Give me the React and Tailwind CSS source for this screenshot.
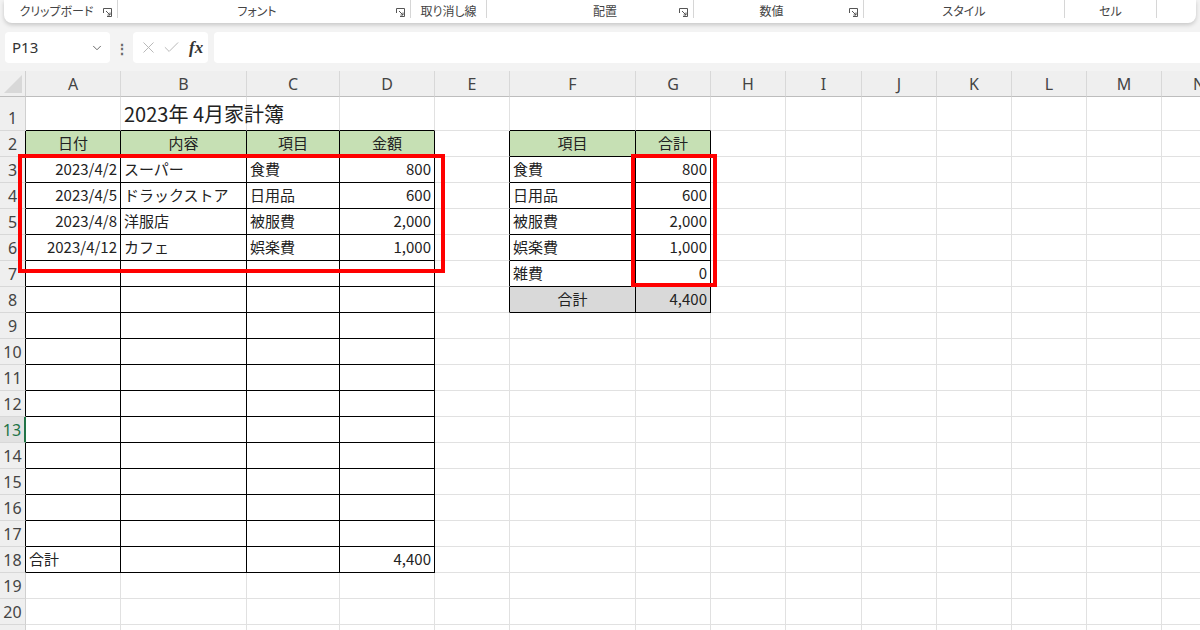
import React from "react";
import { ChevronDown, X, Check } from "lucide-react";

const COLS = [
  { name: "A", w: 95 },
  { name: "B", w: 126 },
  { name: "C", w: 93 },
  { name: "D", w: 95 },
  { name: "E", w: 75 },
  { name: "F", w: 126 },
  { name: "G", w: 75 },
  { name: "H", w: 75 },
  { name: "I", w: 76 },
  { name: "J", w: 75 },
  { name: "K", w: 75 },
  { name: "L", w: 75 },
  { name: "M", w: 75 },
  { name: "N", w: 75 },
];

const ROWS = Array.from({ length: 21 }, (_, i) => i + 1);

// cell contents: key "row-col"
const DATA = {
  "1-1": { v: "2023年 4月家計簿", title: true },
  "2-0": { v: "日付", a: "c" },
  "2-1": { v: "内容", a: "c" },
  "2-2": { v: "項目", a: "c" },
  "2-3": { v: "金額", a: "c" },
  "3-0": { v: "2023/4/2", a: "r" },
  "3-1": { v: "スーパー" },
  "3-2": { v: "食費" },
  "3-3": { v: "800", a: "r" },
  "4-0": { v: "2023/4/5", a: "r" },
  "4-1": { v: "ドラックストア" },
  "4-2": { v: "日用品" },
  "4-3": { v: "600", a: "r" },
  "5-0": { v: "2023/4/8", a: "r" },
  "5-1": { v: "洋服店" },
  "5-2": { v: "被服費" },
  "5-3": { v: "2,000", a: "r" },
  "6-0": { v: "2023/4/12", a: "r" },
  "6-1": { v: "カフェ" },
  "6-2": { v: "娯楽費" },
  "6-3": { v: "1,000", a: "r" },
  "18-0": { v: "合計" },
  "18-3": { v: "4,400", a: "r" },
  "2-5": { v: "項目", a: "c" },
  "2-6": { v: "合計", a: "c" },
  "3-5": { v: "食費" },
  "3-6": { v: "800", a: "r" },
  "4-5": { v: "日用品" },
  "4-6": { v: "600", a: "r" },
  "5-5": { v: "被服費" },
  "5-6": { v: "2,000", a: "r" },
  "6-5": { v: "娯楽費" },
  "6-6": { v: "1,000", a: "r" },
  "7-5": { v: "雑費" },
  "7-6": { v: "0", a: "r" },
  "8-5": { v: "合計", a: "c" },
  "8-6": { v: "4,400", a: "r" },
};

const inT = (r, c) =>
  (r >= 2 && r <= 18 && c >= 0 && c <= 3) ||
  (r >= 2 && r <= 8 && c >= 5 && c <= 6);

const Launcher = () => (
  <svg width="9" height="9" viewBox="0 0 9 9" fill="none" stroke="#555" strokeWidth="1">
    <path d="M0.5 5V0.5H8.5V8.5H4" />
    <path d="M3 3L7 7M7 4.5V7H4.5" />
  </svg>
);

const RibbonGroup = ({ label, w, launcher, pl = 0, last }) => (
  <div className="flex h-full items-start" style={{ width: w }}>
    <div className="flex-1 h-full flex items-center justify-center pb-[1px]" style={{ paddingLeft: pl }}>
      {label}
    </div>
    {launcher ? (
      <div className="w-[14px] h-full flex items-center pt-[2px]">
        <Launcher />
      </div>
    ) : null}
    {last ? null : <div className="w-px h-[18px] bg-[#d6d6d6] shrink-0"></div>}
  </div>
);

const Cell = ({ r, c, w }) => {
  const d = DATA[`${r}-${c}`];
  const rb = inT(r, c) || inT(r, c + 1) ? "border-r-black" : "border-r-[#e1e1e1]";
  const bb = inT(r, c) || inT(r + 1, c) ? "border-b-black" : "border-b-[#e1e1e1]";
  let bg = "";
  if (r === 2 && inT(r, c)) bg = "bg-[#c6e0b4]";
  if (r === 8 && (c === 5 || c === 6)) bg = "bg-[#d9d9d9]";
  const align =
    d && d.a === "r" ? "justify-end" : d && d.a === "c" ? "justify-center" : "justify-start";
  return (
    <div
      className={`flex shrink-0 items-center border-r border-b px-[3px] whitespace-nowrap ${rb} ${bb} ${bg} ${align}`}
      style={{ width: w }}
    >
      {d ? (
        <span className={d.title ? "text-[20px] relative z-10" : "text-[15px]"}>{d.v}</span>
      ) : null}
    </div>
  );
};

export default function App() {
  return (
    <div className="relative w-[1200px] h-[630px] overflow-hidden bg-[#f3f3f3] font-['Noto_Sans_CJK_JP',sans-serif] text-[#222]">
      {/* ribbon bottom */}
      <div className="mx-[4px] h-[23px] bg-white rounded-b-[8px] shadow-[0_2px_4px_rgba(0,0,0,0.18)] flex items-center text-[12px] text-[#444] [font-feature-settings:'palt']">
        <RibbonGroup label="クリップボード" w={114} launcher pl={6} />
        <RibbonGroup label="フォント" w={293} launcher />
        <RibbonGroup label="取り消し線" w={76} />
        <RibbonGroup label="配置" w={207} launcher pl={44} />
        <RibbonGroup label="数値" w={170} launcher />
        <RibbonGroup label="スタイル" w={201} />
        <RibbonGroup label="セル" w={92} />
        <RibbonGroup label="" w={39} last />
      </div>

      {/* formula bar */}
      <div className="mt-[9px] h-[31px] flex items-center">
        <div className="ml-[5px] w-[105px] h-full bg-white rounded-[4px] flex items-center justify-between pl-[7px] pr-[6px]">
          <span className="text-[15px] text-[#333] font-['Noto_Sans',sans-serif]">P13</span>
          <ChevronDown size={14} strokeWidth={1.5} color="#555" />
        </div>
        <div className="w-[23px] flex justify-center text-[#666] text-[14px] font-bold leading-none">⋮</div>
        <div className="w-[75px] h-full bg-white rounded-[4px] flex items-center pl-[6px] gap-[4px]">
          <X size={19} strokeWidth={1.2} color="#b5b5b5" />
          <Check size={19} strokeWidth={1.2} color="#b5b5b5" />
          <span className="ml-[4px] font-['Liberation_Serif',serif] italic font-bold text-[17px] text-[#333]">fx</span>
        </div>
        <div className="ml-[6px] flex-1 h-full bg-white rounded-l-[4px]"></div>
      </div>

      {/* sheet */}
      <div className="mt-[8px] bg-white">
        <div className="flex h-[26px] bg-[#efefef] text-[#444] text-[16px] font-['Noto_Sans',sans-serif]">
          <div className="w-[26px] shrink-0 border-r border-b border-r-[#d0d0d0] border-b-[#bdbdbd] flex items-end justify-end p-[3px]">
            <svg width="18" height="18" viewBox="0 0 18 18">
              <polygon points="18,0 18,18 0,18" fill="#d8d8d8" />
            </svg>
          </div>
          {COLS.map((col) => (
            <div
              key={col.name}
              className="shrink-0 border-r border-b border-r-[#d8d8d8] border-b-[#bdbdbd] flex items-center justify-center"
              style={{ width: col.w }}
            >
              {col.name}
            </div>
          ))}
        </div>
        {ROWS.map((r) => (
          <div key={r} className={`flex ${r === 1 ? "h-[34px]" : "h-[26px]"}`}>
            <div
              className={`w-[26px] shrink-0 border-b border-b-[#d8d8d8] flex items-end justify-center text-[16px] font-['Noto_Sans',sans-serif] ${
                r === 13
                  ? "bg-[#e2e2e2] text-[#217346] border-r-2 border-r-[#217346]"
                  : r >= 2 && r <= 18
                  ? "bg-[#efefef] text-[#444] border-r border-r-black"
                  : "bg-[#efefef] text-[#444] border-r border-r-[#d0d0d0]"
              }`}
            >
              <span className="h-[25px] flex items-center">{r < 21 ? r : ""}</span>
            </div>
            {COLS.map((col, c) => (
              <Cell key={col.name} r={r} c={c} w={col.w} />
            ))}
          </div>
        ))}
      </div>

      {/* highlight boxes */}
      <div className="absolute left-[18px] top-[154px] w-[427px] h-[119px] border-[4px] border-[#ff0000]"></div>
      <div className="absolute left-[631px] top-[154px] w-[86px] h-[133px] border-[4px] border-[#ff0000]"></div>
    </div>
  );
}
